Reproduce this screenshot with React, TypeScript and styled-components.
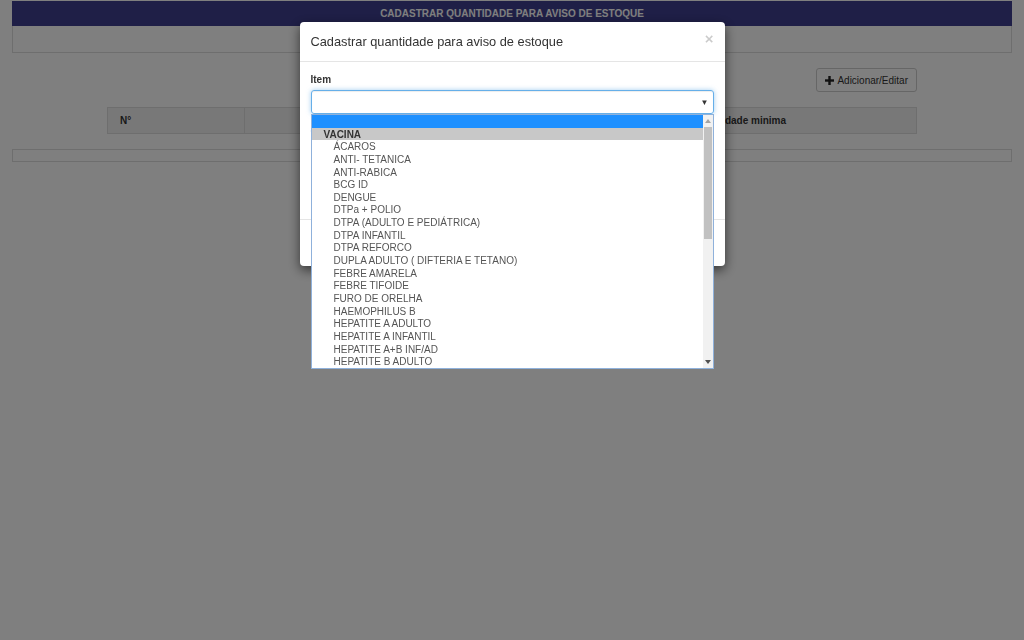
import styled, { createGlobalStyle } from "styled-components";

const GlobalStyle = createGlobalStyle`
  html, body {
    margin: 0;
    padding: 0;
    background: #fff;
  }
  body {
    font-family: "Liberation Sans", Arial, sans-serif;
    font-size: 10px;
    color: #333;
    height: 640px;
    overflow: hidden;
  }
  * {
    box-sizing: border-box;
  }
`;

const Page = styled.div`
  padding: 1px 12px 0;
`;

const TitleBar = styled.div`
  height: 25px;
  line-height: 25px;
  background: #3e3e8e;
  color: #fff;
  font-weight: bold;
  font-size: 10px;
  text-align: center;
`;

const TitlePanel = styled.div`
  height: 27px;
  border: 1px solid #ddd;
  border-top: none;
`;

const Toolbar = styled.div`
  width: 810px;
  margin: 15px auto 0;
  display: flex;
  justify-content: flex-end;
`;

const Button = styled.button<{ $primary?: boolean }>`
  display: inline-flex;
  align-items: center;
  gap: 3px;
  height: 24px;
  padding: 0 8px;
  border: 1px solid ${({ $primary }) => ($primary ? "#2e6da4" : "#ccc")};
  border-radius: 3px;
  background: ${({ $primary }) => ($primary ? "#337ab7" : "#fff")};
  color: ${({ $primary }) => ($primary ? "#fff" : "#333")};
  font-family: inherit;
  font-size: 10px;
`;

const Table = styled.table`
  width: 810px;
  margin: 15px auto 0;
  border-collapse: collapse;
`;

const Th = styled.th<{ $w: number; $center?: boolean }>`
  width: ${({ $w }) => $w}px;
  height: 26px;
  padding: 0 12px;
  background: #f1f1f1;
  border: 1px solid #ddd;
  text-align: ${({ $center }) => ($center ? "center" : "left")};
  font-weight: bold;
  font-size: 10px;
`;

const FooterPanel = styled.div`
  margin-top: 15px;
  height: 13px;
  border: 1px solid #ddd;
`;

const Backdrop = styled.div`
  position: fixed;
  inset: 0;
  background: rgba(0, 0, 0, 0.5);
`;

const Modal = styled.div`
  position: relative;
  width: 425px;
  margin: 22px auto 0;
  background: #fff;
  border-radius: 4px;
  box-shadow: 0 4px 12px rgba(0, 0, 0, 0.6);
`;

const ModalHeader = styled.div`
  height: 40px;
  padding: 0 11px;
  border-bottom: 1px solid #e5e5e5;
  display: flex;
  align-items: center;
  justify-content: space-between;
`;

const ModalTitle = styled.h4`
  margin: 0;
  font-size: 12.8px;
  font-weight: normal;
  color: #333;
`;

const Close = styled.span`
  margin-top: -6px;
  font-size: 15px;
  font-weight: bold;
  line-height: 1;
  color: #000;
  opacity: 0.2;
`;

const ModalBody = styled.div`
  height: 157px;
  padding: 11px;
`;

const FormGroup = styled.div`
  margin-bottom: 11px;
`;

const Label = styled.label`
  display: block;
  height: 14px;
  line-height: 14px;
  margin-bottom: 3px;
  font-weight: bold;
  font-size: 10px;
`;

const SelectBox = styled.div`
  position: relative;
  height: 24px;
  border: 1px solid #66afe9;
  border-radius: 3px;
  box-shadow: inset 0 1px 1px rgba(0, 0, 0, 0.075),
    0 0 5px rgba(102, 175, 233, 0.6);
`;

const Caret = styled.span`
  position: absolute;
  right: 4px;
  top: 7px;
  font-size: 8px;
  color: #333;
`;

const Input = styled.div`
  height: 24px;
  border: 1px solid #ccc;
  border-radius: 3px;
`;

const ModalFooter = styled.div`
  height: 47px;
  padding: 0 11px;
  border-top: 1px solid #e5e5e5;
  display: flex;
  align-items: center;
  justify-content: flex-end;
  gap: 4px;
`;

const Dropdown = styled.div`
  position: absolute;
  top: 23px;
  left: -1px;
  width: 403px;
  height: 255px;
  background: #fff;
  border: 1px solid #8fb1db;
  display: flex;
  z-index: 2;
`;

const OptionList = styled.div`
  flex: 1;
  overflow: hidden;
`;

const Option = styled.div<{ $kind?: "selected" | "group" }>`
  height: 12.65px;
  line-height: 14px;
  font-size: 10px;
  white-space: nowrap;
  overflow: visible;
  padding-left: ${({ $kind }) => ($kind === "group" ? 12 : 22)}px;
  font-weight: ${({ $kind }) => ($kind === "group" ? "bold" : "normal")};
  color: ${({ $kind }) => ($kind === "group" ? "#333" : "#555")};
  background: ${({ $kind }) =>
    $kind === "selected" ? "#1e90ff" : $kind === "group" ? "#c8c8c8" : "transparent"};
`;

const Scrollbar = styled.div`
  width: 10px;
  background: #f1f1f1;
  display: flex;
  flex-direction: column;
`;

const ScrollButton = styled.div`
  height: 12px;
  display: flex;
  align-items: center;
  justify-content: center;
`;

const Thumb = styled.div`
  height: 112px;
  margin: 0 1px;
  background: #c1c1c1;
`;

const Track = styled.div`
  flex: 1;
`;

const PlusIcon = () => (
  <svg width="9" height="9" viewBox="0 0 9 9">
    <rect x="3.3" y="0" width="2.4" height="9" fill="#222" />
    <rect x="0" y="3.3" width="9" height="2.4" fill="#222" />
  </svg>
);

const Arrow = ({ up, color }: { up?: boolean; color: string }) => (
  <svg width="6" height="4" viewBox="0 0 6 4">
    <polygon points={up ? "0,4 6,4 3,0" : "0,0 6,0 3,4"} fill={color} />
  </svg>
);

const items = [
  "ÁCAROS",
  "ANTI- TETANICA",
  "ANTI-RABICA",
  "BCG ID",
  "DENGUE",
  "DTPa + POLIO",
  "DTPA (ADULTO E PEDIÁTRICA)",
  "DTPA INFANTIL",
  "DTPA REFORCO",
  "DUPLA ADULTO ( DIFTERIA E TETANO)",
  "FEBRE AMARELA",
  "FEBRE TIFOIDE",
  "FURO DE ORELHA",
  "HAEMOPHILUS B",
  "HEPATITE A ADULTO",
  "HEPATITE A INFANTIL",
  "HEPATITE A+B INF/AD",
  "HEPATITE B ADULTO",
];

export default function App() {
  return (
    <>
      <GlobalStyle />
      <Page>
        <TitleBar>CADASTRAR QUANTIDADE PARA AVISO DE ESTOQUE</TitleBar>
        <TitlePanel />
        <Toolbar>
          <Button>
            <PlusIcon /> Adicionar/Editar
          </Button>
        </Toolbar>
        <Table>
          <thead>
            <tr>
              <Th $w={137}>N°</Th>
              <Th $w={437} $center>
                Item
              </Th>
              <Th $w={236}>Quantidade minima</Th>
            </tr>
          </thead>
        </Table>
        <FooterPanel />
      </Page>
      <Backdrop>
        <Modal>
          <ModalHeader>
            <ModalTitle>Cadastrar quantidade para aviso de estoque</ModalTitle>
            <Close>×</Close>
          </ModalHeader>
          <ModalBody>
            <FormGroup>
              <Label>Item</Label>
              <SelectBox>
                <Caret>▼</Caret>
                <Dropdown>
                  <OptionList>
                    <Option $kind="selected" />
                    <Option $kind="group">VACINA</Option>
                    {items.map((item) => (
                      <Option key={item}>{item}</Option>
                    ))}
                  </OptionList>
                  <Scrollbar>
                    <ScrollButton>
                      <Arrow up color="#a3a3a3" />
                    </ScrollButton>
                    <Thumb />
                    <Track />
                    <ScrollButton>
                      <Arrow color="#505050" />
                    </ScrollButton>
                  </Scrollbar>
                </Dropdown>
              </SelectBox>
            </FormGroup>
            <FormGroup>
              <Label>Quantidade mínima</Label>
              <Input />
            </FormGroup>
          </ModalBody>
          <ModalFooter>
            <Button>Fechar</Button>
            <Button $primary>Salvar</Button>
          </ModalFooter>
        </Modal>
      </Backdrop>
    </>
  );
}
